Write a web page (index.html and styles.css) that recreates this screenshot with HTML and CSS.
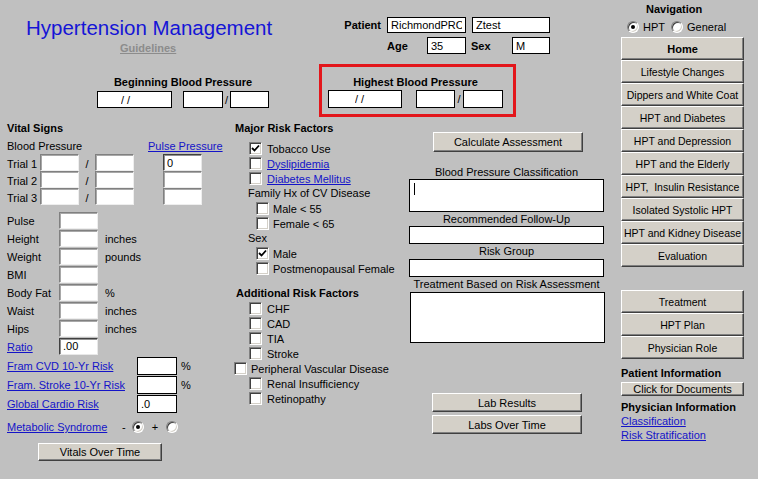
FILE: index.html
```html
<!DOCTYPE html>
<html lang="en">
<head>
  <meta charset="utf-8" />
  <title>Hypertension Management</title>
  <link rel="stylesheet" href="styles.css">
</head>

<body>
  <div class="page">
    <div class="main">
      <div class="header">
        <div class="top-row">
          <div class="title-block">
            <h1 class="title">Hypertension Management</h1>
            <a href="#" class="guidelines">Guidelines</a>
          </div>
          <div class="patient">
            <div class="patient-row">
              <span class="patient-label">Patient</span>
              <input class="box box-black first-name" value="RichmondPROD" />
              <input class="box box-black last-name" value="Ztest" />
            </div>
            <div class="patient-row second">
              <span class="small-label">Age</span>
              <input class="box box-black age" value="35" />
              <span class="small-label sex-label">Sex</span>
              <input class="box box-black sex" value="M" />
            </div>
          </div>
        </div>

        <div class="bp-row">
          <div class="bp-group beginning">
            <div class="bp-title">Beginning Blood Pressure</div>
            <div class="bp-inputs">
              <input class="box box-black bp-date" value="/ /" />
              <input class="box box-black bp-sys" />
              <span class="bp-slash">/</span>
              <input class="box box-black bp-dia" />
            </div>
          </div>
          <div class="bp-group highest">
            <div class="bp-title">Highest Blood Pressure</div>
            <div class="bp-inputs">
              <input class="box box-black bp-date" value="/ /" />
              <input class="box box-black bp-sys" />
              <span class="bp-slash">/</span>
              <input class="box box-black bp-dia" />
            </div>
          </div>
        </div>
      </div>

      <div class="body">
        <!-- vital signs -->
        <div class="vitals">
          <div class="section-title">Vital Signs</div>
          <div class="bp-head">
            <span>Blood Pressure</span>
            <a href="#">Pulse Pressure</a>
          </div>
          <div class="trials">
            <div class="trial-row">
              <span class="lbl">Trial 1</span>
              <input class="box box-sunken" />
              <span class="slash">/</span>
              <input class="box box-sunken" />
              <input class="box box-dark pp" value="0" />
            </div>
            <div class="trial-row">
              <span class="lbl">Trial 2</span>
              <input class="box box-sunken" />
              <span class="slash">/</span>
              <input class="box box-sunken" />
              <input class="box box-sunken pp" />
            </div>
            <div class="trial-row">
              <span class="lbl">Trial 3</span>
              <input class="box box-sunken" />
              <span class="slash">/</span>
              <input class="box box-sunken" />
              <input class="box box-sunken pp" />
            </div>
          </div>

          <div class="measures">
            <div class="measure-row"><span class="lbl">Pulse</span><input class="box box-sunken" /></div>
            <div class="measure-row"><span class="lbl">Height</span><input class="box box-sunken" /><span class="unit">inches</span></div>
            <div class="measure-row"><span class="lbl">Weight</span><input class="box box-sunken" /><span class="unit">pounds</span></div>
            <div class="measure-row"><span class="lbl">BMI</span><input class="box box-sunken" /></div>
            <div class="measure-row"><span class="lbl">Body Fat</span><input class="box box-sunken" /><span class="unit">%</span></div>
            <div class="measure-row"><span class="lbl">Waist</span><input class="box box-sunken" /><span class="unit">inches</span></div>
            <div class="measure-row"><span class="lbl">Hips</span><input class="box box-sunken" /><span class="unit">inches</span></div>
            <div class="measure-row"><a href="#" class="lbl">Ratio</a><input class="box box-dark" value=".00" /></div>
          </div>

          <div class="risk-scores">
            <div class="score-row"><a href="#" class="lbl">Fram CVD 10-Yr Risk</a><input class="box box-black" /><span class="unit">%</span></div>
            <div class="score-row"><a href="#" class="lbl">Fram. Stroke 10-Yr Risk</a><input class="box box-black" /><span class="unit">%</span></div>
            <div class="score-row"><a href="#" class="lbl">Global Cardio Risk</a><input class="box box-black" value=".0" /></div>
          </div>

          <div class="metabolic">
            <a href="#">Metabolic Syndrome</a>
            <span class="sign">-</span>
            <span class="radio on"></span>
            <span class="plus">+</span>
            <span class="radio"></span>
          </div>

          <button class="btn vitals-btn">Vitals Over Time</button>
        </div>

        <!-- risk factors -->
        <div class="risk">
          <div class="section-title">Major Risk Factors</div>
          <div class="risk-list">
            <div class="check-row l1"><span class="cb"><svg width="9" height="9" viewBox="0 0 9 9"><path d="M1 4 L3.5 6.5 L8 1.5" fill="none" stroke="#000" stroke-width="1.8"/></svg></span><span>Tobacco Use</span></div>
            <div class="check-row l1"><span class="cb"></span><a href="#">Dyslipidemia</a></div>
            <div class="check-row l1"><span class="cb"></span><a href="#">Diabetes Mellitus</a></div>
            <div class="sub-head">Family Hx of CV Disease</div>
            <div class="check-row l2"><span class="cb"></span><span>Male &lt; 55</span></div>
            <div class="check-row l2"><span class="cb"></span><span>Female &lt; 65</span></div>
            <div class="sub-head">Sex</div>
            <div class="check-row l2"><span class="cb"><svg width="9" height="9" viewBox="0 0 9 9"><path d="M1 4 L3.5 6.5 L8 1.5" fill="none" stroke="#000" stroke-width="1.8"/></svg></span><span>Male</span></div>
            <div class="check-row l2"><span class="cb"></span><span>Postmenopausal Female</span></div>
          </div>

          <div class="section-title additional">Additional Risk Factors</div>
          <div class="risk-list second">
            <div class="check-row l1"><span class="cb"></span><span>CHF</span></div>
            <div class="check-row l1"><span class="cb"></span><span>CAD</span></div>
            <div class="check-row l1"><span class="cb"></span><span>TIA</span></div>
            <div class="check-row l1"><span class="cb"></span><span>Stroke</span></div>
            <div class="check-row l0"><span class="cb"></span><span>Peripheral Vascular Disease</span></div>
            <div class="check-row l1"><span class="cb"></span><span>Renal Insufficiency</span></div>
            <div class="check-row l1"><span class="cb"></span><span>Retinopathy</span></div>
          </div>
        </div>

        <!-- assessment -->
        <div class="results">
          <button class="btn calc-btn">Calculate Assessment</button>
          <div class="out-label first">Blood Pressure Classification</div>
          <div class="out-box class-box"><span class="caret"></span></div>
          <div class="out-label">Recommended Follow-Up</div>
          <div class="out-box short"></div>
          <div class="out-label">Risk Group</div>
          <div class="out-box short spaced"></div>
          <div class="out-label">Treatment Based on Risk Assessment</div>
          <div class="out-box treat spaced"></div>

          <button class="btn lab-btn">Lab Results</button>
          <button class="btn lab-btn second">Labs Over Time</button>
        </div>
      </div>
    </div>

    <!-- navigation -->
    <div class="nav">
      <div class="nav-title">Navigation</div>
      <div class="nav-radios">
        <span class="radio on"></span><span class="radio-text">HPT</span>
        <span class="radio general"></span><span class="radio-text">General</span>
      </div>
      <div class="nav-buttons">
        <button class="btn nav-btn home">Home</button>
        <button class="btn nav-btn">Lifestyle Changes</button>
        <button class="btn nav-btn">Dippers and White Coat</button>
        <button class="btn nav-btn">HPT and Diabetes</button>
        <button class="btn nav-btn">HPT and Depression</button>
        <button class="btn nav-btn">HPT and the Elderly</button>
        <button class="btn nav-btn">HPT,&nbsp; Insulin Resistance</button>
        <button class="btn nav-btn">Isolated Systolic HPT</button>
        <button class="btn nav-btn">HPT and Kidney Disease</button>
        <button class="btn nav-btn">Evaluation</button>
      </div>
      <div class="nav-buttons lower">
        <button class="btn nav-btn">Treatment</button>
        <button class="btn nav-btn">HPT Plan</button>
        <button class="btn nav-btn">Physician Role</button>
      </div>
      <div class="info-title">Patient Information</div>
      <button class="btn docs-btn">Click for Documents</button>
      <div class="info-title physician">Physician Information</div>
      <div class="nav-links">
        <a href="#">Classification</a>
        <a href="#">Risk Stratification</a>
      </div>
    </div>
  </div>
</body>
</html>
```

FILE: styles.css
```css
* {
  box-sizing: border-box;
}

html, body {
  margin: 0;
  padding: 0;
}

body {
  width: 758px;
  height: 479px;
  overflow: hidden;
  background-color: #c0c0c0;
  font-family: "Liberation Sans", Arial, sans-serif;
  font-size: 11px;
  line-height: 14px;
  color: #000;
}

a {
  color: #1414c8;
  text-decoration: underline;
}

/* fields */
.box {
  display: block;
  margin: 0;
  padding: 0 3px;
  font: inherit;
  color: #000;
  background-color: #fff;
  outline: none;
  border-radius: 0;
}

.box-black {
  border: 1px solid #000;
}

.box-sunken {
  border: 1px solid;
  border-color: #808080 #eeeeee #eeeeee #808080;
  box-shadow: inset 1px 1px #a8a8a8;
}

.box-dark {
  border: 1px solid;
  border-color: #404040 #e8e8e8 #e8e8e8 #404040;
  box-shadow: inset 1px 1px #909090;
}

.page {
  display: flex;
}

.main {
  width: 615px;
}

/* header */
.header {
  height: 120px;
}

.top-row {
  display: flex;
  height: 64px;
}

.title-block {
  width: 318px;
  margin-left: 26px;
  padding-top: 16px;
}

.title {
  margin: 0;
  font-size: 20.5px;
  line-height: 24px;
  font-weight: normal;
  color: #1515d6;
  white-space: nowrap;
}

.guidelines {
  display: inline-block;
  margin: 1px 0 0 94px;
  color: #8c8c8c;
  font-weight: bold;
}

.patient {
  padding-top: 17px;
}

.patient-row {
  display: flex;
  align-items: center;
  height: 16px;
}

.patient-row input {
  height: 16px;
}

.patient-row.second {
  height: 17px;
  margin-top: 4px;
  margin-left: 43px;
}

.patient-row.second input {
  height: 17px;
}

.patient-label {
  width: 43px;
  padding-right: 6px;
  text-align: right;
  font-weight: bold;
}

.small-label {
  width: 40px;
  font-weight: bold;
}

.sex-label {
  width: 41px;
  margin-left: 5px;
}

.patient .first-name { width: 79px; }
.patient .last-name { width: 78px; margin-left: 6px; }
.patient .age { width: 39px; }
.patient .sex { width: 38px; }

/* blood pressure groups */
.bp-row {
  display: flex;
  align-items: flex-start;
  height: 56px;
}

.bp-title {
  font-weight: bold;
  text-align: center;
}

.bp-inputs {
  display: flex;
  align-items: center;
}

.bp-slash {
  text-align: center;
}

.beginning {
  width: 172px;
  margin-left: 97px;
  padding-top: 11px;
}

.beginning .bp-inputs { margin-top: 2px; }
.beginning input { height: 17px; }
.beginning .bp-date { width: 75px; margin-right: 11px; padding-left: 23px; }
.beginning .bp-sys { width: 40px; }
.beginning .bp-slash { width: 7px; }
.beginning .bp-dia { width: 39px; }

.highest {
  margin-left: 50px;
  border: 3px solid #e3161b;
  padding: 8px 10px 6px 6px;
}

.highest .bp-inputs { margin-top: 1px; }
.highest input { height: 18px; }
.highest .bp-date { width: 74px; margin-right: 14px; padding-left: 26px; }
.highest .bp-sys { width: 39px; }
.highest .bp-slash { width: 8px; }
.highest .bp-dia { width: 40px; }

/* body columns */
.body {
  display: flex;
}

.vitals {
  width: 234px;
  padding-left: 7px;
}

.risk {
  width: 166px;
}

.results {
  width: 215px;
}

.section-title {
  margin-top: 1px;
  font-weight: bold;
}

/* vitals */
.bp-head {
  display: flex;
  margin-top: 4px;
}

.bp-head span {
  width: 141px;
}

.trials {
  margin-top: 1px;
}

.trial-row {
  display: flex;
  align-items: center;
  height: 17px;
}

.trial-row .lbl { width: 33px; padding-top: 3px; }
.trial-row .box { width: 39px; height: 17px; }
.trial-row .slash { width: 16px; padding-top: 3px; text-align: center; }
.trial-row .pp { margin-left: 29px; }

.measures {
  margin-top: 7px;
}

.measure-row {
  display: flex;
  align-items: flex-start;
  height: 18px;
  line-height: 17px;
}

.measure-row .lbl { width: 52px; padding-top: 1px; }
.measure-row .box { width: 39px; height: 17px; }
.measure-row .unit { margin-left: 7px; padding-top: 1px; }

.risk-scores {
  margin-top: 1px;
}

.score-row {
  display: flex;
  align-items: flex-start;
  height: 19px;
  line-height: 18px;
}

.score-row .lbl { width: 130px; }
.score-row .box { width: 40px; height: 18px; }
.score-row .unit { margin-left: 4px; }

.metabolic {
  display: flex;
  align-items: center;
  height: 14px;
  margin-top: 6px;
}

.metabolic a { width: 115px; }
.metabolic .sign { width: 10px; }
.metabolic .plus { width: 22px; text-align: center; }

/* radios and checkboxes */
.radio {
  display: flex;
  align-items: center;
  justify-content: center;
  width: 12px;
  height: 12px;
  border-radius: 50%;
  border: 1px solid;
  border-color: #808080 #ffffff #ffffff #808080;
  background-color: #fff;
  box-shadow: inset 1px 1px #404040, inset -1px -1px #d4d0c8;
}

.radio.on::after {
  content: "";
  width: 4px;
  height: 4px;
  border-radius: 50%;
  background-color: #000;
}

.cb {
  display: flex;
  align-items: center;
  justify-content: center;
  width: 13px;
  height: 13px;
  margin-right: 5px;
  border: 1px solid;
  border-color: #808080 #ffffff #ffffff #808080;
  background-color: #fff;
  box-shadow: inset 1px 1px #404040, inset -1px -1px #d4d0c8;
}

/* buttons */
.btn {
  display: block;
  padding: 0;
  font: inherit;
  color: #000;
  text-align: center;
  white-space: nowrap;
  background-color: #d4d0c8;
  border: 1px solid;
  border-color: #ffffff #404040 #404040 #ffffff;
  box-shadow: inset -1px -1px #808080;
  border-radius: 0;
}

.vitals-btn {
  width: 124px;
  height: 18px;
  margin: 9px 0 0 31px;
}

/* risk factors */
.risk .section-title {
  margin-left: 1px;
}

.risk-list {
  margin-top: 6px;
}

.risk-list.second {
  margin-top: 1px;
}

.section-title.additional {
  margin-top: 10px;
  margin-left: 2px;
}

.check-row {
  display: flex;
  align-items: center;
  height: 15px;
}

.check-row.l1 { padding-left: 15px; }
.check-row.l2 { padding-left: 22px; }
.check-row.l2 .cb,
.check-row.l0 .cb { margin-right: 4px; }

.sub-head {
  height: 15px;
  line-height: 15px;
  padding-left: 14px;
}

/* assessment */
.calc-btn {
  width: 150px;
  height: 20px;
  margin: 12px 0 0 33px;
}

.out-label {
  width: 195px;
  margin-left: 9px;
  text-align: center;
}

.out-label.first {
  margin-top: 13px;
}

.out-box {
  width: 195px;
  margin-left: 9px;
  background-color: #fff;
  border: 1px solid #000;
}

.out-box.spaced { margin-top: 1px; }
.out-box.class-box { height: 33px; padding: 3px 4px; }
.out-box.short { height: 18px; }
.out-box.treat { height: 51px; margin-left: 10px; }

.caret {
  display: block;
  width: 1px;
  height: 12px;
  background-color: #000;
}

.lab-btn {
  width: 150px;
  height: 19px;
  margin: 50px 0 0 32px;
}

.lab-btn.second {
  margin-top: 3px;
}

/* navigation */
.nav {
  width: 143px;
}

.nav-title {
  margin: 2px 0 0 31px;
  font-weight: bold;
}

.nav-radios {
  display: flex;
  align-items: center;
  height: 13px;
  margin-top: 4px;
  padding-left: 12px;
}

.radio-text {
  margin-left: 4px;
}

.nav-radios .general {
  margin-left: 6px;
}

.nav-buttons {
  width: 123px;
  margin: 4px 0 0 6px;
}

.nav-buttons.lower {
  margin-top: 23px;
}

.nav-btn {
  width: 123px;
  height: 23px;
  font-size: 10.5px;
}

.nav-btn.home {
  font-size: 11px;
  font-weight: bold;
}

.info-title {
  margin: 7px 0 0 6px;
  font-weight: bold;
}

.info-title.physician {
  margin-top: 4px;
}

.docs-btn {
  width: 123px;
  height: 14px;
  margin: 2px 0 0 6px;
  line-height: 12px;
}

.nav-links a {
  display: block;
  margin-left: 6px;
  width: max-content;
}
```
